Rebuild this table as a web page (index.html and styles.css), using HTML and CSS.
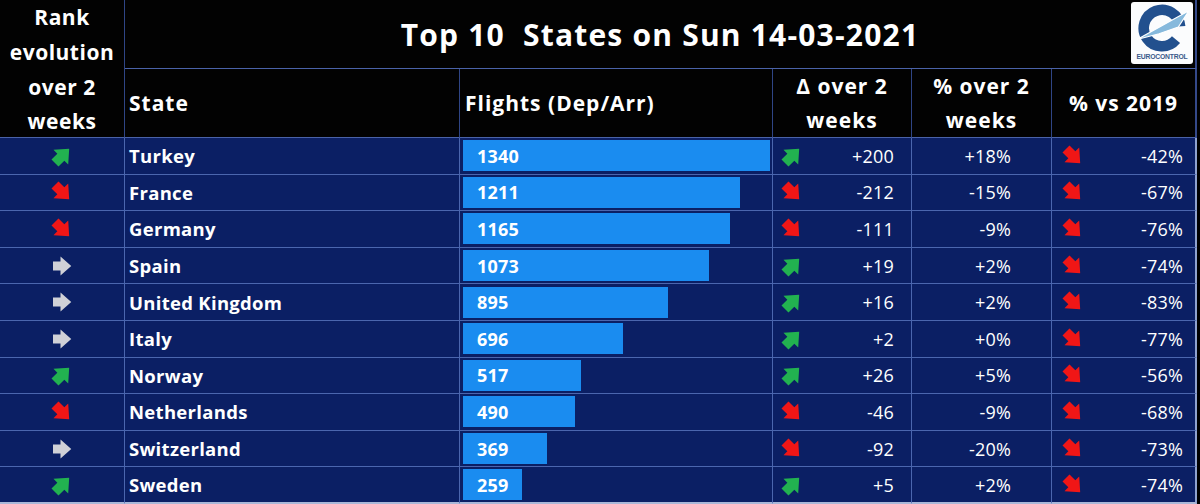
FILE: index.html
```html
<!DOCTYPE html>
<html>
<head>
<meta charset="utf-8">
<link rel="stylesheet" href="styles.css">
</head>
<body>
<svg class="defs" width="0" height="0">
  <defs>
    <symbol id="arr" viewBox="0 0 16 16">
      <polygon points="0.8,4.4 6.8,4.4 6.8,0.4 15.4,8 6.8,15.6 6.8,11.6 0.8,11.6"/>
    </symbol>
  </defs>
</svg>
<div class="board">
  <div class="cell hd rankhd">Rank<br>evolution<br>over 2<br>weeks</div>
  <div class="cell hd titlecell">
    <h1 class="title">Top 10&nbsp; States on Sun 14-03-2021</h1>
    <div class="logo">
      <svg viewBox="0 0 60 50" class="logo-mark">
        <path d="M48.9 23.3 A19 19 0 1 0 44.6 37.2" fill="none" stroke="#22508e" stroke-width="11"/>
        <polygon points="4,37 58,7 47,24 27,31" fill="#86b9dc" stroke="#ffffff" stroke-width="1.2"/>
      </svg>
      <span class="logo-text">EUROCONTROL</span>
    </div>
  </div>
  <div class="cell hd left">State</div>
  <div class="cell hd left flhd">Flights (Dep/Arr)</div>
  <div class="cell hd center">Δ over 2<br>weeks</div>
  <div class="cell hd center">% over 2<br>weeks</div>
  <div class="cell hd center last">% vs 2019</div>

  <!-- Turkey -->
  <div class="cell d rank"><svg class="ar up"><use href="#arr"/></svg></div>
  <div class="cell d state">Turkey</div>
  <div class="cell d fl"><div class="bar" style="width:307px">1340</div></div>
  <div class="cell d delta"><svg class="ar up"><use href="#arr"/></svg><span>+200</span></div>
  <div class="cell d pct">+18%</div>
  <div class="cell d vs last"><svg class="ar down"><use href="#arr"/></svg><span>-42%</span></div>

  <!-- France -->
  <div class="cell d rank"><svg class="ar down"><use href="#arr"/></svg></div>
  <div class="cell d state">France</div>
  <div class="cell d fl"><div class="bar" style="width:277px">1211</div></div>
  <div class="cell d delta"><svg class="ar down"><use href="#arr"/></svg><span>-212</span></div>
  <div class="cell d pct">-15%</div>
  <div class="cell d vs last"><svg class="ar down"><use href="#arr"/></svg><span>-67%</span></div>

  <!-- Germany -->
  <div class="cell d rank"><svg class="ar down"><use href="#arr"/></svg></div>
  <div class="cell d state">Germany</div>
  <div class="cell d fl"><div class="bar" style="width:267px">1165</div></div>
  <div class="cell d delta"><svg class="ar down"><use href="#arr"/></svg><span>-111</span></div>
  <div class="cell d pct">-9%</div>
  <div class="cell d vs last"><svg class="ar down"><use href="#arr"/></svg><span>-76%</span></div>

  <!-- Spain -->
  <div class="cell d rank"><svg class="ar side"><use href="#arr"/></svg></div>
  <div class="cell d state">Spain</div>
  <div class="cell d fl"><div class="bar" style="width:246px">1073</div></div>
  <div class="cell d delta"><svg class="ar up"><use href="#arr"/></svg><span>+19</span></div>
  <div class="cell d pct">+2%</div>
  <div class="cell d vs last"><svg class="ar down"><use href="#arr"/></svg><span>-74%</span></div>

  <!-- United Kingdom -->
  <div class="cell d rank"><svg class="ar side"><use href="#arr"/></svg></div>
  <div class="cell d state">United Kingdom</div>
  <div class="cell d fl"><div class="bar" style="width:205px">895</div></div>
  <div class="cell d delta"><svg class="ar up"><use href="#arr"/></svg><span>+16</span></div>
  <div class="cell d pct">+2%</div>
  <div class="cell d vs last"><svg class="ar down"><use href="#arr"/></svg><span>-83%</span></div>

  <!-- Italy -->
  <div class="cell d rank"><svg class="ar side"><use href="#arr"/></svg></div>
  <div class="cell d state">Italy</div>
  <div class="cell d fl"><div class="bar" style="width:160px">696</div></div>
  <div class="cell d delta"><svg class="ar up"><use href="#arr"/></svg><span>+2</span></div>
  <div class="cell d pct">+0%</div>
  <div class="cell d vs last"><svg class="ar down"><use href="#arr"/></svg><span>-77%</span></div>

  <!-- Norway -->
  <div class="cell d rank"><svg class="ar up"><use href="#arr"/></svg></div>
  <div class="cell d state">Norway</div>
  <div class="cell d fl"><div class="bar" style="width:118px">517</div></div>
  <div class="cell d delta"><svg class="ar up"><use href="#arr"/></svg><span>+26</span></div>
  <div class="cell d pct">+5%</div>
  <div class="cell d vs last"><svg class="ar down"><use href="#arr"/></svg><span>-56%</span></div>

  <!-- Netherlands -->
  <div class="cell d rank"><svg class="ar down"><use href="#arr"/></svg></div>
  <div class="cell d state">Netherlands</div>
  <div class="cell d fl"><div class="bar" style="width:112px">490</div></div>
  <div class="cell d delta"><svg class="ar down"><use href="#arr"/></svg><span>-46</span></div>
  <div class="cell d pct">-9%</div>
  <div class="cell d vs last"><svg class="ar down"><use href="#arr"/></svg><span>-68%</span></div>

  <!-- Switzerland -->
  <div class="cell d rank"><svg class="ar side"><use href="#arr"/></svg></div>
  <div class="cell d state">Switzerland</div>
  <div class="cell d fl"><div class="bar" style="width:84px">369</div></div>
  <div class="cell d delta"><svg class="ar down"><use href="#arr"/></svg><span>-92</span></div>
  <div class="cell d pct">-20%</div>
  <div class="cell d vs last"><svg class="ar down"><use href="#arr"/></svg><span>-73%</span></div>

  <!-- Sweden -->
  <div class="cell d rank lastrow"><svg class="ar up"><use href="#arr"/></svg></div>
  <div class="cell d state lastrow">Sweden</div>
  <div class="cell d fl lastrow"><div class="bar" style="width:59px">259</div></div>
  <div class="cell d delta lastrow"><svg class="ar up"><use href="#arr"/></svg><span>+5</span></div>
  <div class="cell d pct lastrow">+2%</div>
  <div class="cell d vs last lastrow"><svg class="ar down"><use href="#arr"/></svg><span>-74%</span></div>
</div>
</body>
</html>
```

FILE: styles.css
```css
* { box-sizing: border-box; }
html, body { margin: 0; padding: 0; }
body {
  width: 1200px;
  height: 504px;
  background: #000;
  font-family: "Open Sans", Lato, "Liberation Sans", sans-serif;
  color: #fff;
  overflow: hidden;
}
.defs { position: absolute; }
.board {
  display: grid;
  grid-template-columns: 125px 335px 313px 139px 140px 145px;
  grid-template-rows: 69px 69px repeat(10, 1fr);
  width: 1197px;
  height: 504px;
}
.cell {
  border-right: 1px solid #2f4585;
  border-bottom: 1px solid #2f4585;
  display: flex;
  align-items: center;
}
.hd {
  background: #020202;
  font-weight: 700;
  font-size: 21px;
  line-height: 34px;
  letter-spacing: 1px;
}
.rankhd {
  grid-row: 1 / 3;
  grid-column: 1;
  justify-content: center;
  text-align: center;
  font-size: 21px;
  line-height: 34.8px;
  letter-spacing: 0.5px;
  padding-top: 2px;
  border-bottom-color: #3a5090;
}
.titlecell {
  grid-column: 2 / 7;
  grid-row: 1;
  justify-content: center;
  position: relative;
  border-bottom-color: #34498a;
}
.title {
  margin: 0;
  font-size: 30px;
  font-weight: 700;
  letter-spacing: 1.2px;
  padding-top: 2px;
}
.logo {
  position: absolute;
  right: 2px;
  top: 2px;
  width: 62px;
  height: 62px;
  background: #fbfcfd;
  border-radius: 3px;
  display: flex;
  flex-direction: column;
  align-items: center;
  padding-top: 2px;
}
.logo-mark { width: 58px; height: 48px; flex: none; }
.logo-text {
  font-family: "Liberation Sans", sans-serif;
  font-size: 6.8px;
  line-height: 8px;
  color: #3a5a8a;
  letter-spacing: -0.2px;
  margin-top: 1px;
}
.left { padding-left: 4px; }
.flhd { padding-left: 5px; }
.center { justify-content: center; text-align: center; }
.hd.last, .titlecell { border-right: 2px solid #34498a; }
.hd { border-bottom-color: #4a62a8; }

.d {
  background: #0b1f64;
  border-right-color: #4b66ae;
  border-bottom-color: #4b66ae;
  font-size: 18px;
  letter-spacing: 0.2px;
}
.lastrow { border-bottom: 2px solid #a9b7d8; }
.last { border-right: 2px solid #8fa2cf; }
.rank { justify-content: center; }
.state { font-weight: 700; padding-left: 4px; letter-spacing: 0.3px; font-size: 18.5px; }
.fl { padding-left: 3px; }
.bar {
  height: 31px;
  background: #1a8cf0;
  font-weight: 700;
  padding-left: 14px;
  display: flex;
  align-items: center;
}
.delta { padding-left: 8px; padding-right: 17px; justify-content: space-between; }
.pct { justify-content: flex-end; padding-right: 40px; }
.vs { padding-left: 10px; padding-right: 12px; justify-content: space-between; }

.ar { width: 22px; height: 22px; flex: none; }
.ar.up { fill: #22b250; transform: rotate(-45deg); }
.ar.down { fill: #f01616; transform: rotate(45deg); }
.ar.side { fill: #d0d1d7; width: 20px; height: 20px; }
```
